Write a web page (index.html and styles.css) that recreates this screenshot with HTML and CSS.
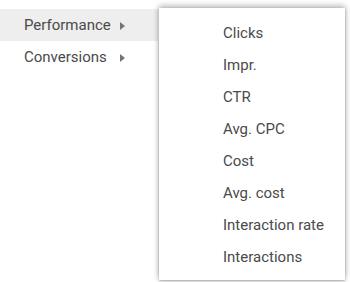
FILE: index.html
```html
<!DOCTYPE html>
<html>
<head>
<meta charset="utf-8">
<link rel="stylesheet" href="styles.css">
</head>
<body>
<div class="page">
  <div class="menu">
    <div class="item active"><span class="label">Performance</span><span class="arrow"></span></div>
    <div class="item"><span class="label">Conversions</span><span class="arrow"></span></div>
  </div>
  <div class="submenu">
    <div class="sub-item">Clicks</div>
    <div class="sub-item">Impr.</div>
    <div class="sub-item">CTR</div>
    <div class="sub-item">Avg. CPC</div>
    <div class="sub-item">Cost</div>
    <div class="sub-item">Avg. cost</div>
    <div class="sub-item">Interaction rate</div>
    <div class="sub-item">Interactions</div>
  </div>
</div>
</body>
</html>
```
FILE: styles.css
```css
html, body {
  margin: 0;
  padding: 0;
  background: #fff;
}
.page {
  width: 350px;
  height: 282px;
  overflow: hidden;
  position: relative;
  font-family: Roboto, "Liberation Sans", sans-serif;
  font-size: 15px;
  color: #4a4a4a;
}
.menu {
  width: 158px;
  padding-top: 9px;
}
.item {
  height: 32px;
  display: flex;
  align-items: center;
  padding-left: 24px;
}
.item.active {
  background: #eeeeee;
}
.label {
  width: 96px;
}
.arrow {
  width: 0;
  height: 0;
  border-top: 4px solid transparent;
  border-bottom: 4px solid transparent;
  border-left: 5px solid #757575;
  margin-top: 1px;
}
.submenu {
  position: absolute;
  left: 159px;
  top: 8px;
  width: 186px;
  height: 272px;
  box-sizing: border-box;
  padding: 9px 0 8px 64px;
  background: #fff;
  box-shadow: 0 -3px 6px rgba(0,0,0,0.18), 0 0 6px rgba(0,0,0,0.2), 0 1px 2px rgba(0,0,0,0.25);
}
.sub-item {
  height: 32px;
  display: flex;
  align-items: center;
}
```
